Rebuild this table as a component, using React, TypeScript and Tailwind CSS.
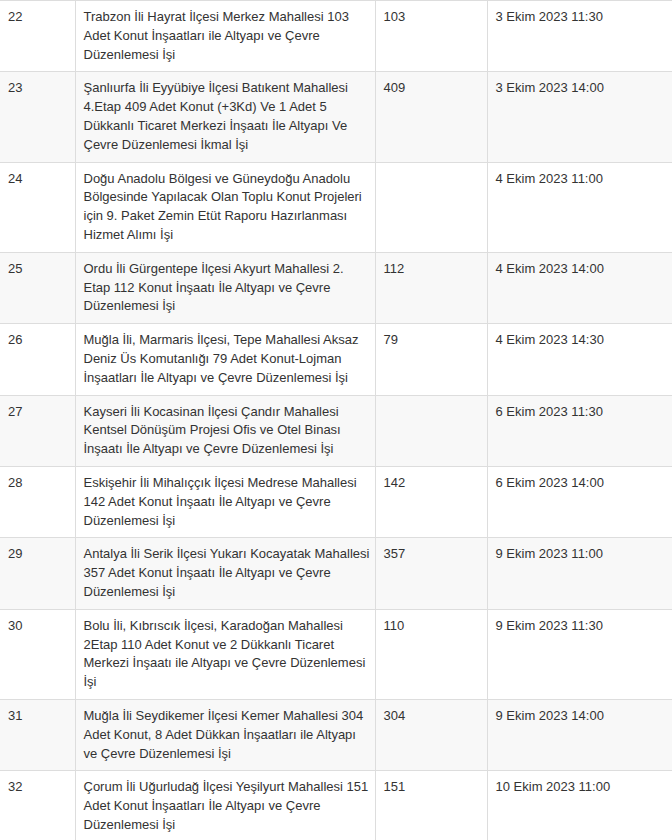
type Row = {
  no: number;
  lines: string[];
  count: string;
  date: string;
};

const rows: Row[] = [
  {
    no: 22,
    lines: [
      'Trabzon İli Hayrat İlçesi Merkez Mahallesi 103',
      'Adet Konut İnşaatları ile Altyapı ve Çevre',
      'Düzenlemesi İşi',
    ],
    count: '103',
    date: '3 Ekim 2023 11:30',
  },
  {
    no: 23,
    lines: [
      'Şanlıurfa İli Eyyübiye İlçesi Batıkent Mahallesi',
      '4.Etap 409 Adet Konut (+3Kd) Ve 1 Adet 5',
      'Dükkanlı Ticaret Merkezi İnşaatı İle Altyapı Ve',
      'Çevre Düzenlemesi İkmal İşi',
    ],
    count: '409',
    date: '3 Ekim 2023 14:00',
  },
  {
    no: 24,
    lines: [
      'Doğu Anadolu Bölgesi ve Güneydoğu Anadolu',
      'Bölgesinde Yapılacak Olan Toplu Konut Projeleri',
      'için 9. Paket Zemin Etüt Raporu Hazırlanması',
      'Hizmet Alımı İşi',
    ],
    count: '',
    date: '4 Ekim 2023 11:00',
  },
  {
    no: 25,
    lines: [
      'Ordu İli Gürgentepe İlçesi Akyurt Mahallesi 2.',
      'Etap 112 Konut İnşaatı İle Altyapı ve Çevre',
      'Düzenlemesi İşi',
    ],
    count: '112',
    date: '4 Ekim 2023 14:00',
  },
  {
    no: 26,
    lines: [
      'Muğla İli, Marmaris İlçesi, Tepe Mahallesi Aksaz',
      'Deniz Üs Komutanlığı 79 Adet Konut-Lojman',
      'İnşaatları İle Altyapı ve Çevre Düzenlemesi İşi',
    ],
    count: '79',
    date: '4 Ekim 2023 14:30',
  },
  {
    no: 27,
    lines: [
      'Kayseri İli Kocasinan İlçesi Çandır Mahallesi',
      'Kentsel Dönüşüm Projesi Ofis ve Otel Binası',
      'İnşaatı İle Altyapı ve Çevre Düzenlemesi İşi',
    ],
    count: '',
    date: '6 Ekim 2023 11:30',
  },
  {
    no: 28,
    lines: [
      'Eskişehir İli Mihalıççık İlçesi Medrese Mahallesi',
      '142 Adet Konut İnşaatı İle Altyapı ve Çevre',
      'Düzenlemesi İşi',
    ],
    count: '142',
    date: '6 Ekim 2023 14:00',
  },
  {
    no: 29,
    lines: [
      'Antalya İli Serik İlçesi Yukarı Kocayatak Mahallesi',
      '357 Adet Konut İnşaatı İle Altyapı ve Çevre',
      'Düzenlemesi İşi',
    ],
    count: '357',
    date: '9 Ekim 2023 11:00',
  },
  {
    no: 30,
    lines: [
      'Bolu İli, Kıbrıscık İlçesi, Karadoğan Mahallesi',
      '2Etap 110 Adet Konut ve 2 Dükkanlı Ticaret',
      'Merkezi İnşaatı ile Altyapı ve Çevre Düzenlemesi',
      'İşi',
    ],
    count: '110',
    date: '9 Ekim 2023 11:30',
  },
  {
    no: 31,
    lines: [
      'Muğla İli Seydikemer İlçesi Kemer Mahallesi 304',
      'Adet Konut, 8 Adet Dükkan İnşaatları ile Altyapı',
      've Çevre Düzenlemesi İşi',
    ],
    count: '304',
    date: '9 Ekim 2023 14:00',
  },
  {
    no: 32,
    lines: [
      'Çorum İli Uğurludağ İlçesi Yeşilyurt Mahallesi 151',
      'Adet Konut İnşaatları İle Altyapı ve Çevre',
      'Düzenlemesi İşi',
    ],
    count: '151',
    date: '10 Ekim 2023 11:00',
  },
];

export default function App() {
  return (
    <div className="w-[672px] h-[840px] overflow-hidden bg-white font-['Liberation_Sans',Arial,sans-serif] text-[13px] leading-[18.8px] text-[#333]">
      <table className="w-full table-fixed border-collapse">
        <colgroup>
          <col className="w-[75px]" />
          <col className="w-[300px]" />
          <col className="w-[112px]" />
          <col />
        </colgroup>
        <tbody>
          {rows.map((r, i) => (
            <tr key={r.no} className={i % 2 === 1 ? 'bg-[#f8f8f8]' : 'bg-white'}>
              <td className="align-top border-t border-[#ddd] px-2 pt-[7px] pb-[7px]">
                {r.no}
              </td>
              <td className="align-top border-t border-l border-[#ddd] px-2 pt-[7px] pb-[7px]">
                {r.lines.map((line, j) => (
                  <div key={j} className="whitespace-nowrap">
                    {line}
                  </div>
                ))}
              </td>
              <td className="align-top border-t border-l border-[#ddd] px-2 pt-[7px] pb-[7px]">
                {r.count}
              </td>
              <td className="align-top border-t border-l border-[#ddd] px-2 pt-[7px] pb-[7px]">
                {r.date}
              </td>
            </tr>
          ))}
        </tbody>
      </table>
    </div>
  );
}
